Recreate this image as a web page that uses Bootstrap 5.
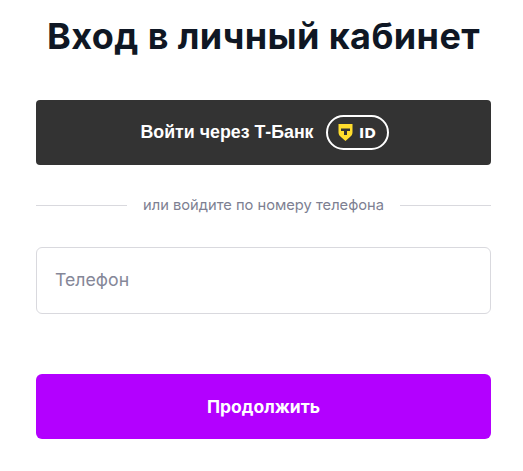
<!DOCTYPE html>
<html lang="ru">
<head>
<meta charset="utf-8">
<title>Вход</title>
<link href="https://cdn.jsdelivr.net/npm/bootstrap@5.3.0/dist/css/bootstrap.min.css" rel="stylesheet">
<style>
html,body{background:#fff;overflow:hidden}
body{font-family:Inter,"Noto Sans",sans-serif;height:471px}
.login-wrap{padding:0 32px 0 36px}
.login-title{font-size:36px;line-height:44px;font-weight:700;color:#0f1724;margin:14px 0 0;letter-spacing:.4px;white-space:nowrap}
.tbank-btn{height:65px;margin-top:42px;padding-left:14px;background:#333;border:0;border-radius:4px;color:#fff;font:700 17.8px "Liberation Sans",sans-serif}
.tbank-btn:hover,.tbank-btn:active{background:#333!important;color:#fff!important}
.id-pill{width:63px;height:35px;border:2px solid #fff;border-radius:18px;margin-left:12px;flex:none;gap:6px}
.id-text{font:700 14px/1 "DejaVu Sans",sans-serif}
.or-row{margin-top:30px;height:20px;color:#7d7f92;font-size:14.7px;line-height:20px;white-space:nowrap}
.or-line{height:1px;background:#d9d9de}
.phone-box{height:67px;margin-top:32px;border:1px solid #d9d9de;border-radius:6px;padding:0 18px 2px;font-size:17.7px;color:#212529;box-shadow:none}
.phone-box::placeholder{color:#858798}
.next-btn{height:65px;margin-top:60px;padding-top:8px;background:#b300ff;border:0;border-radius:6px;color:#fff;font-size:17.5px;font-weight:700}
.next-btn:hover,.next-btn:active{background:#b300ff!important;color:#fff!important}
</style>
</head>
<body>
<main class="login-wrap">
<h1 class="login-title text-center">Вход в личный кабинет</h1>
<button type="button" class="btn tbank-btn w-100 d-flex align-items-center justify-content-center">
<span>Войти через Т-Банк</span>
<span class="id-pill d-inline-flex align-items-center justify-content-center">
<svg width="15" height="17" viewBox="0 0 15 17" aria-hidden="true"><path d="M.5 0h14v8.300c0 3.700-3 5-7 8.700-4-3.700-7-5-7-8.700z" fill="#ffdd2d"/><path d="M3 4.500h9v2.500H9v4H6V7H3z" fill="#333"/></svg>
<span class="id-text">ID</span>
</span>
</button>
<div class="or-row d-flex align-items-center gap-3">
<div class="or-line flex-grow-1"></div>
<span>или войдите по номеру телефона</span>
<div class="or-line flex-grow-1"></div>
</div>
<input class="form-control phone-box" type="text" placeholder="Телефон">
<button type="button" class="btn next-btn w-100">Продолжить</button>
</main>
<script src="https://cdn.jsdelivr.net/npm/bootstrap@5.3.0/dist/js/bootstrap.bundle.min.js"></script>
</body>
</html>
